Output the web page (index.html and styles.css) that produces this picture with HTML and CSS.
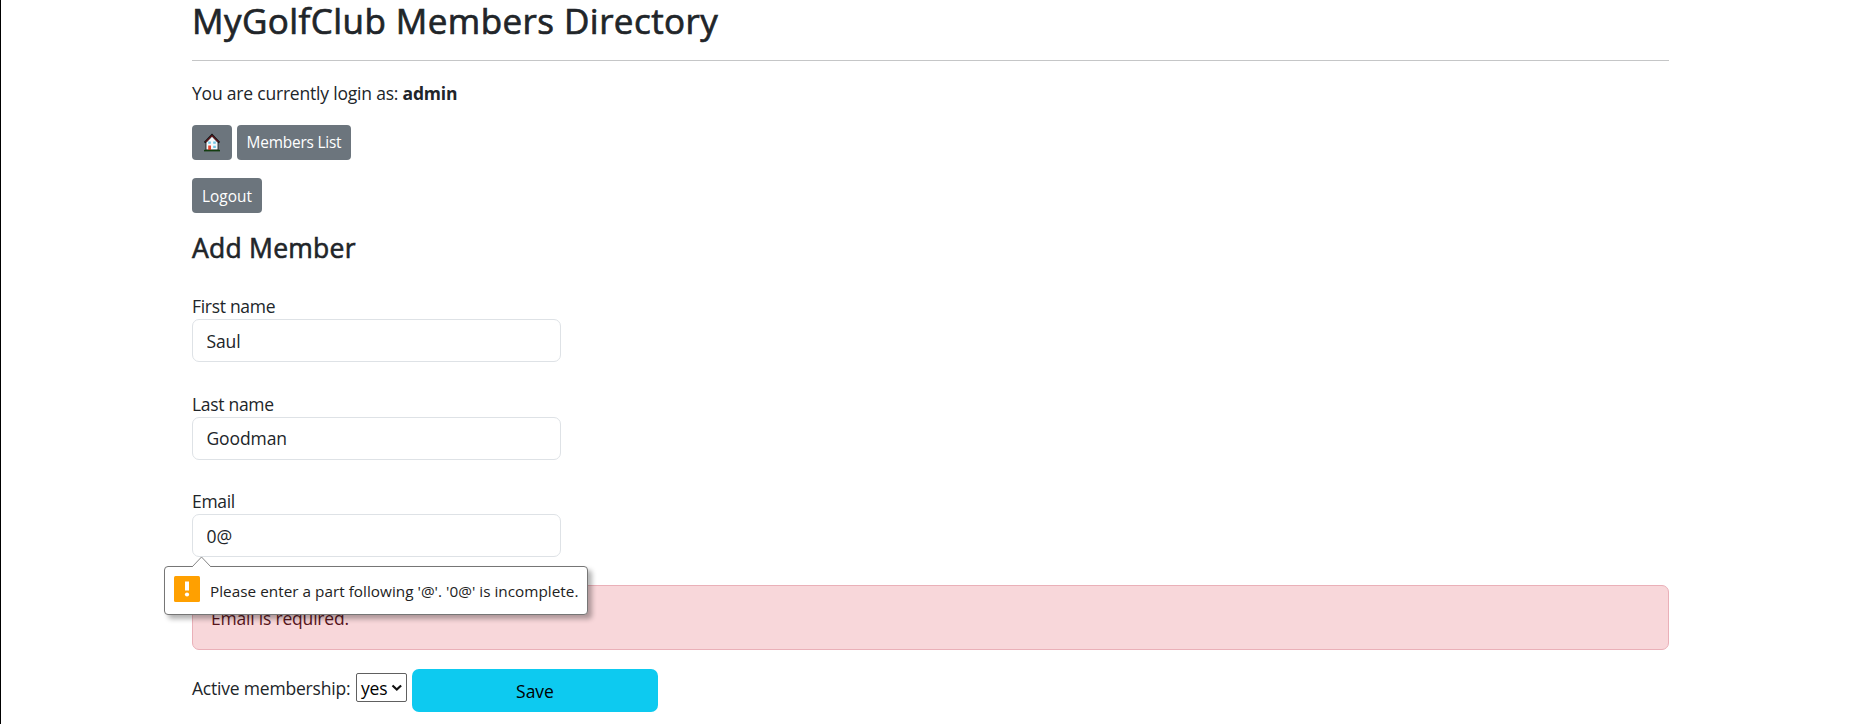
FILE: index.html
```html
<!DOCTYPE html>
<html lang="en">
<head>
<meta charset="utf-8">
<title>MyGolfClub Members Directory</title>
<link rel="stylesheet" href="styles.css">
</head>
<body>
<main class="container">
  <h1 class="title"><span>MyGolfClub Members Directory</span></h1>
  <p class="login"><span>You are currently login as:</span> <strong>admin</strong></p>
  <nav class="nav">
    <a class="btn btn-home" aria-label="Home">
      <svg class="house" viewBox="0 0 18 20">
        <path d="M3 9.5 9 3.2l6 6.3V17H3z" fill="#f4f8fa" stroke="#111" stroke-width=".8"/>
        <path d="M1.6 9.6 9 2l7.4 7.6" fill="none" stroke="#111" stroke-width="2"/>
        <path d="M2.6 9 9 2.6 15.4 9" fill="none" stroke="#b5202c" stroke-width=".8"/>
        <path d="M5.2 8.5h2.6v2.2H5.2zM10.2 8.5h2.6v2.2h-2.6zM10.2 12.8h2.6V15h-2.6z" fill="#6fc4e2"/>
        <path d="M5.2 12.5h2.8V17H5.2z" fill="#e0452f"/>
        <path d="M1 17.6h16" stroke="#123d10" stroke-width="1.6"/>
      </svg>
    </a>
    <a class="btn btn-list"><span>Members List</span></a>
  </nav>
  <button class="btn btn-logout"><span>Logout</span></button>
  <h2 class="subtitle"><span>Add Member</span></h2>
  <form class="form">
    <div class="field"><label for="first">First name</label><input id="first" class="input" value="Saul"></div>
    <div class="field"><label for="last">Last name</label><input id="last" class="input" value="Goodman"></div>
    <div class="field field-email">
      <label for="email">Email</label><input id="email" class="input" value="0@">
      <div class="tooltip">
        <svg class="arrow" viewBox="0 0 20 11"><path d="M0 11 9.5 1 19 11" fill="#fff" stroke="#858585"/></svg>
        <svg class="warn" viewBox="0 0 26 26"><rect width="26" height="26" rx="1.5" fill="#ffa000"/><path d="M11 5.5h4v9h-4z" fill="#fff"/><circle cx="13" cy="18.5" r="2.1" fill="#fff"/></svg>
        <span class="tip-text">Please enter a part following '@'. '0@' is incomplete.</span>
      </div>
    </div>
    <div class="alert"><span>Email is required.</span></div>
    <div class="actions">
      <span class="active-label">Active membership:</span>
      <div class="select"><span>yes</span><svg class="chevron" viewBox="0 0 12 8"><path d="m1.5 1.5 4.3 4 4.3-4" fill="none" stroke="#111" stroke-width="2.2"/></svg></div>
      <button class="save" type="button"><span>Save</span></button>
    </div>
  </form>
</main>
</body>
</html>
```
FILE: styles.css
```css
* { box-sizing: border-box; }
html { height: 100%; overflow: hidden; }
body {
  margin: 0;
  height: 724px;
  overflow: hidden;
  border-left: 1px solid #000;
  background: #fff;
  color: #212529;
  font: 400 17.5px/27px "Open Sans", "Noto Sans", sans-serif;
  letter-spacing: -.2px;
}
.container { width: 1477px; margin-left: 191px; }
h1, h2, p { margin: 0; }
.title {
  height: 61px;
  border-bottom: 1px solid #c5c6c7;
  font-size: 35px;
  font-weight: 400;
  line-height: 42px;
  letter-spacing: .44px;
  -webkit-text-stroke: .7px #212529;
}
.login { padding-top: 19px; height: 64px; white-space: nowrap; }
.nav { display: flex; gap: 5px; margin-bottom: 18px; }
.btn {
  display: flex;
  align-items: center;
  justify-content: center;
  height: 35px;
  padding: 0;
  border: 0;
  border-radius: 4px;
  background: #6c757d;
  color: #fff;
  font: 400 15.4px/24px "Open Sans", "Noto Sans", sans-serif;
  white-space: nowrap;
}
.btn-home { width: 40px; }
.btn-list { width: 114px; padding-top: 1px; }
.btn-logout { width: 70px; padding-top: 3px; letter-spacing: 0; }
.house { width: 18px; height: 20px; }
.subtitle {
  height: 80px;
  padding-top: 19px;
  font-size: 26.5px;
  font-weight: 400;
  line-height: 32px;
  letter-spacing: .25px;
  -webkit-text-stroke: .6px #212529;
}
.field { position: relative; height: 97.5px; }
.field-email { height: 97px; }
.field label { display: block; height: 26px; line-height: 27px; letter-spacing: -.3px; }
.input {
  display: block;
  width: 369px;
  height: 43px;
  padding: 0 13.5px;
  border: 1px solid #dee2e6;
  border-radius: 7px;
  background: #fff;
  color: #212529;
  font: inherit;
  letter-spacing: -.1px;
}
.tooltip {
  position: absolute;
  z-index: 2;
  left: -28px;
  top: 78px;
  display: flex;
  width: 424px;
  height: 49px;
  padding: 9px 0 0 9px;
  border: 1px solid #767676;
  border-radius: 4px;
  background: #fff;
  box-shadow: 4px 4px 5px rgba(0, 0, 0, .3);
  color: #222;
  font-size: 15.3px;
  letter-spacing: .02px;
  white-space: nowrap;
}
.arrow { position: absolute; left: 27px; top: -11px; width: 20px; height: 11px; }
.warn { width: 26px; height: 26px; margin-right: 10px; }
.tip-text { padding-top: 2px; }
.alert {
  height: 65px;
  margin-bottom: 19px;
  padding: 19px 18px;
  border: 1px solid #eab0b8;
  border-radius: 7px;
  background: #f8d7da;
  color: #58151c;
}
.actions { display: flex; }
.active-label { width: 164px; padding-top: 6px; white-space: nowrap; }
.select {
  display: flex;
  align-items: center;
  width: 51px;
  height: 29px;
  margin: 4px 5px 0 0;
  padding-left: 4px;
  border: 1px solid #606060;
  border-radius: 2px;
  color: #000;
}
.select span { width: 30px; padding-top: 2px; }
.chevron { width: 12px; height: 8px; }
.save {
  width: 246px;
  height: 43px;
  padding: 2px 0 0;
  border: 0;
  border-radius: 7px;
  background: #0dcaf0;
  color: #000;
  font: inherit;
}
```
